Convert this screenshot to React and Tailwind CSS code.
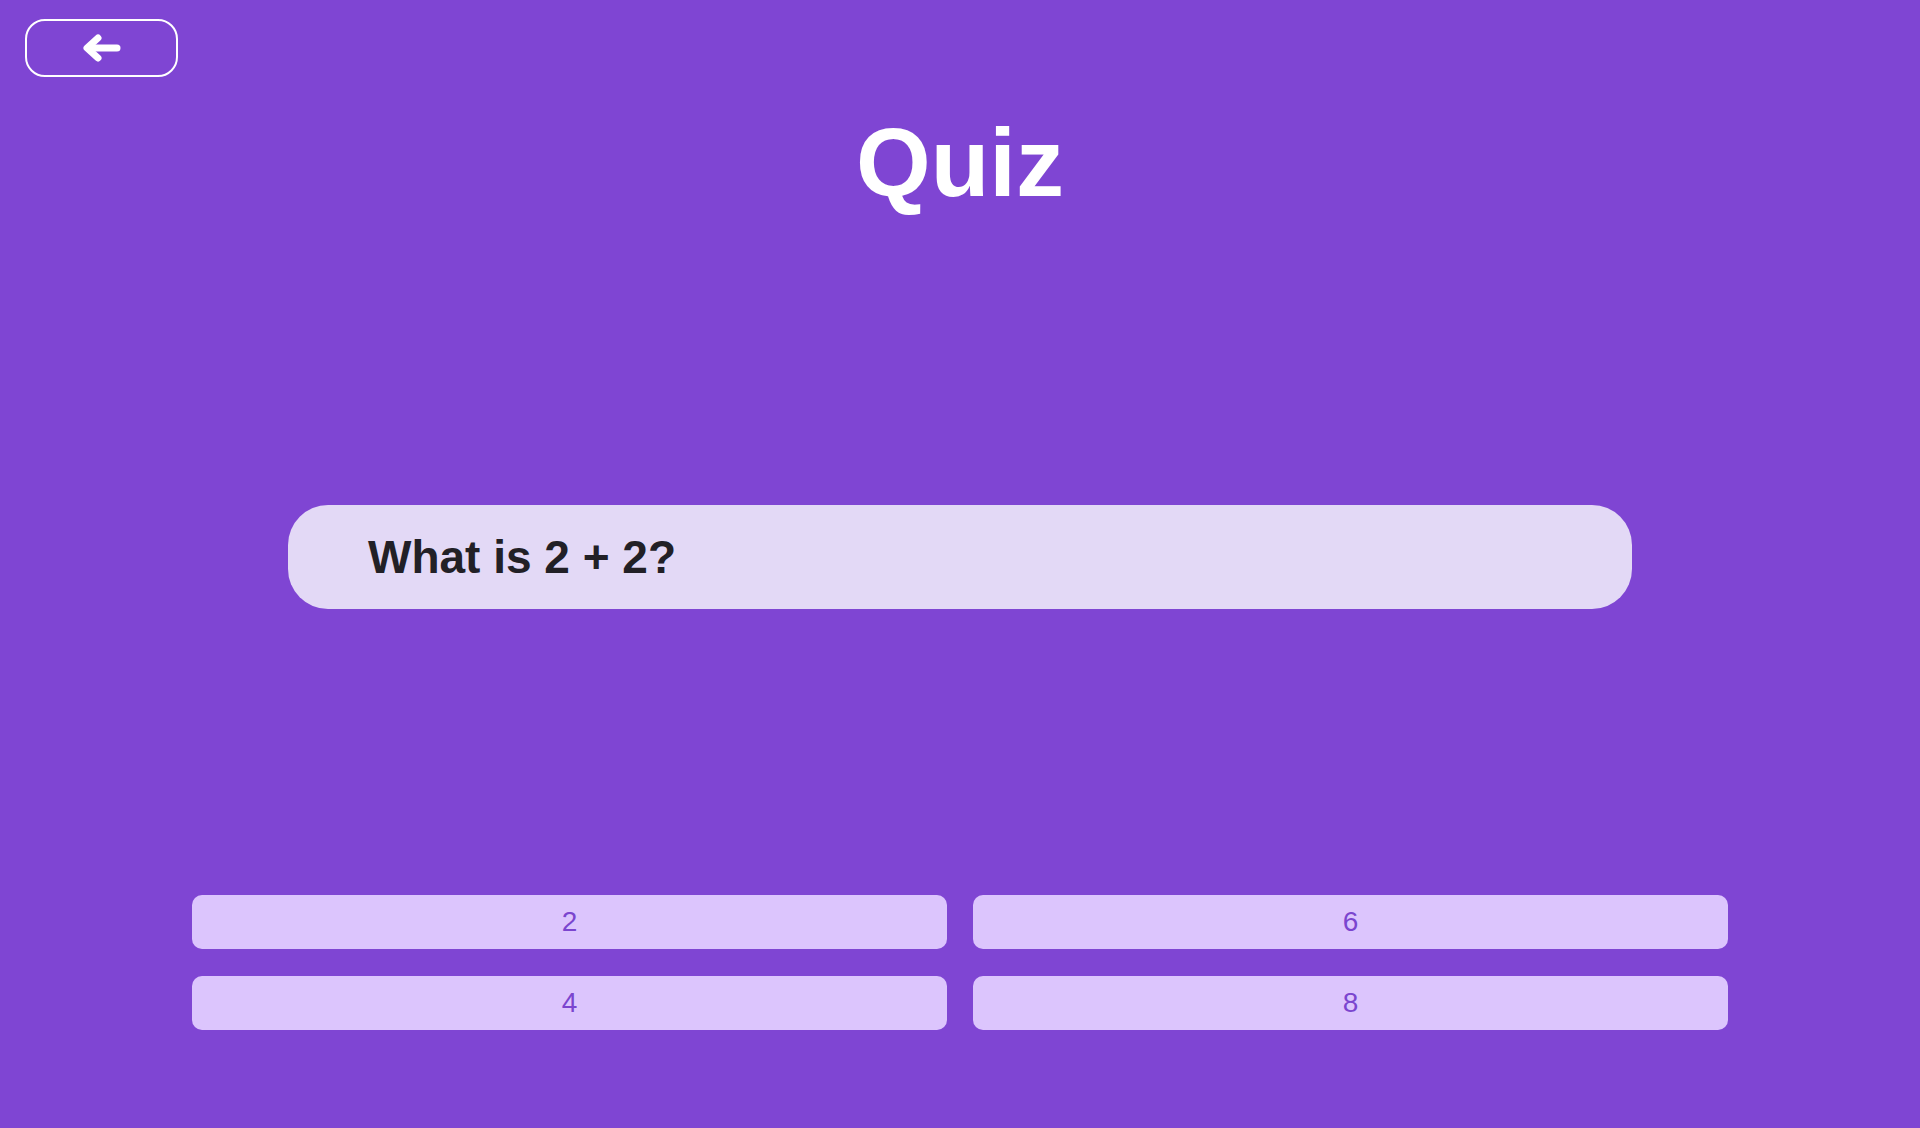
import { useState } from 'react';

const answers = ['2', '6', '4', '8'];

export default function App() {
  const [picked, setPicked] = useState(null);

  return (
    <div className="min-h-[1128px] w-full bg-[#7f45d3] relative font-['Liberation_Sans',Arial,sans-serif]">
      <div className="pt-[19px] pl-[25px]">
        <button className="w-[153px] h-[58px] rounded-[20px] border-2 border-white flex items-center justify-center">
          <svg width="38" height="28" viewBox="0 0 38 28" fill="none">
            <path d="M34 14H6" stroke="white" strokeWidth="7" strokeLinecap="round" />
            <path d="M15 4L4 14L15 24" stroke="white" strokeWidth="7" strokeLinecap="round" strokeLinejoin="round" />
          </svg>
        </button>
      </div>

      <h1 className="text-center text-white font-bold text-[96px] leading-none mt-[38px]">Quiz</h1>

      <div className="mx-[288px] mt-[294px] h-[104px] rounded-[40px] bg-[#e3d9f6] flex items-center pl-[80px]">
        <p className="text-[46px] font-bold text-[#222026]">What is 2 + 2?</p>
      </div>

      <div className="mx-[192px] mt-[286px] grid grid-cols-2 gap-x-[26px] gap-y-[27px]">
        {answers.map((a) => (
          <button
            key={a}
            onClick={() => setPicked(a)}
            className={
              'h-[54px] rounded-[10px] text-[28px] text-[#7b45cf] flex items-center justify-center ' +
              (picked === a ? 'bg-[#cfb3fb]' : 'bg-[#dcc5fd]')
            }
          >
            {a}
          </button>
        ))}
      </div>
    </div>
  );
}
